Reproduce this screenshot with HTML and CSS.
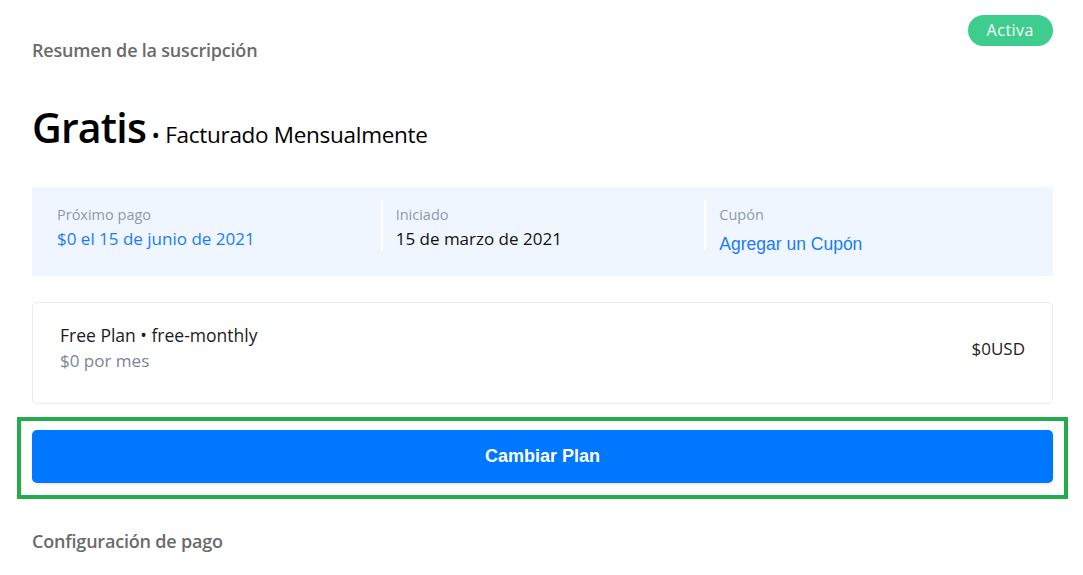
FILE: index.html
```html
<!DOCTYPE html>
<html lang="es">
<head>
<meta charset="utf-8">
<title>Resumen de la suscripción</title>
<link rel="stylesheet" href="styles.css">
</head>
<body>
<main class="page">
  <header class="header">
    <h2 class="section-title">Resumen de la suscripción</h2>
    <span class="badge">Activa</span>
  </header>

  <h1 class="plan-title"><span class="plan-name">Gratis</span><span class="plan-cycle"> • Facturado Mensualmente</span></h1>

  <section class="info">
    <div class="info-col">
      <div class="info-label">Próximo pago</div>
      <div class="info-value info-value--blue">$0 el 15 de junio de 2021</div>
    </div>
    <div class="info-col info-col--divided">
      <div class="info-label">Iniciado</div>
      <div class="info-value">15 de marzo de 2021</div>
    </div>
    <div class="info-col info-col--divided">
      <div class="info-label">Cupón</div>
      <a class="coupon-link" href="#">Agregar un Cupón</a>
    </div>
  </section>

  <section class="plan-card">
    <div class="plan-card-text">
      <div class="plan-card-name">Free Plan • free-monthly</div>
      <div class="plan-card-price">$0 por mes</div>
    </div>
    <div class="plan-card-total">$0USD</div>
  </section>

  <div class="highlight">
    <button class="primary-btn" type="button">Cambiar Plan</button>
  </div>

  <h2 class="section-title section-title--bottom">Configuración de pago</h2>
</main>
</body>
</html>
```

FILE: styles.css
```css
* { box-sizing: border-box; }

html, body {
  margin: 0;
  padding: 0;
  background: #ffffff;
}

body {
  font-family: "Open Sans", "Noto Sans", sans-serif;
  color: #111;
  overflow: hidden;
}

.page {
  padding: 15px 30px 0 32px;
}

.header {
  display: flex;
  justify-content: space-between;
  align-items: flex-start;
}

.section-title {
  margin: 23px 0 0 0;
  font-size: 18px;
  line-height: 24px;
  font-weight: 600;
  color: #6b6b6b;
  letter-spacing: -0.2px;
}

.badge {
  display: inline-block;
  height: 31px;
  line-height: 31px;
  padding: 0 19px;
  border-radius: 16px;
  background: #3ecd8e;
  color: #fff;
  font-size: 16px;
  font-weight: 500;
  letter-spacing: 0.5px;
}

.plan-title {
  margin: 35px 0 0 0;
  font-size: 41px;
  line-height: 60px;
  font-weight: 400;
  white-space: nowrap;
}

.plan-name {
  font-size: 41px;
  font-weight: 600;
  letter-spacing: -0.8px;
  color: #000;
}

.plan-cycle {
  font-size: 22.5px;
  line-height: 1;
  font-weight: 500;
  letter-spacing: -0.3px;
  color: #000;
}

.info {
  margin-top: 30px;
  display: grid;
  grid-template-columns: 1fr 1fr 1fr;
  padding: 13px 25px 26px 25px;
  background: #eff6ff;
}

.info-col {
  height: 50px;
  padding-top: 5px;
}

.info-col--divided {
  border-left: 2px solid #ffffff;
  padding-left: 13px;
}

.info-label {
  font-size: 14.5px;
  line-height: 20px;
  color: #8f99a8;
}

.info-value {
  margin-top: 2px;
  font-size: 17px;
  line-height: 24px;
  font-weight: 500;
  color: #111;
}

.info-value--blue {
  color: #1b7cf5;
}

.coupon-link {
  display: inline-block;
  margin-top: 7px;
  font-family: "Liberation Sans", Arial, sans-serif;
  font-size: 17.5px;
  line-height: 24px;
  color: #1a7cf7;
  text-decoration: none;
}

.plan-card {
  margin-top: 26px;
  display: flex;
  justify-content: space-between;
  align-items: center;
  padding: 20px 27px 30px 27px;
  border: 1px solid #e6ecf2;
  border-radius: 5px;
}

.plan-card-name {
  font-size: 17.5px;
  line-height: 25px;
  font-weight: 500;
  color: #1c1c1c;
}

.plan-card-price {
  font-size: 17px;
  line-height: 25px;
  color: #7a8694;
}

.plan-card-total {
  font-size: 17px;
  line-height: 25px;
  color: #222;
}

.highlight {
  margin: 13px -15px 0 -15px;
  border: 4px solid #22ac4b;
  padding: 9px 11px 12px 11px;
}

.primary-btn {
  display: flex;
  align-items: center;
  justify-content: center;
  width: 100%;
  height: 53px;
  border: 0;
  border-radius: 5px;
  background: #0077ff;
  color: #fff;
  font-family: "Liberation Sans", Arial, sans-serif;
  font-size: 18px;
  font-weight: 700;
  box-shadow: 0 2px 3px rgba(0, 0, 0, 0.08);
  cursor: pointer;
}

.section-title--bottom {
  margin-top: 30px;
}
```
